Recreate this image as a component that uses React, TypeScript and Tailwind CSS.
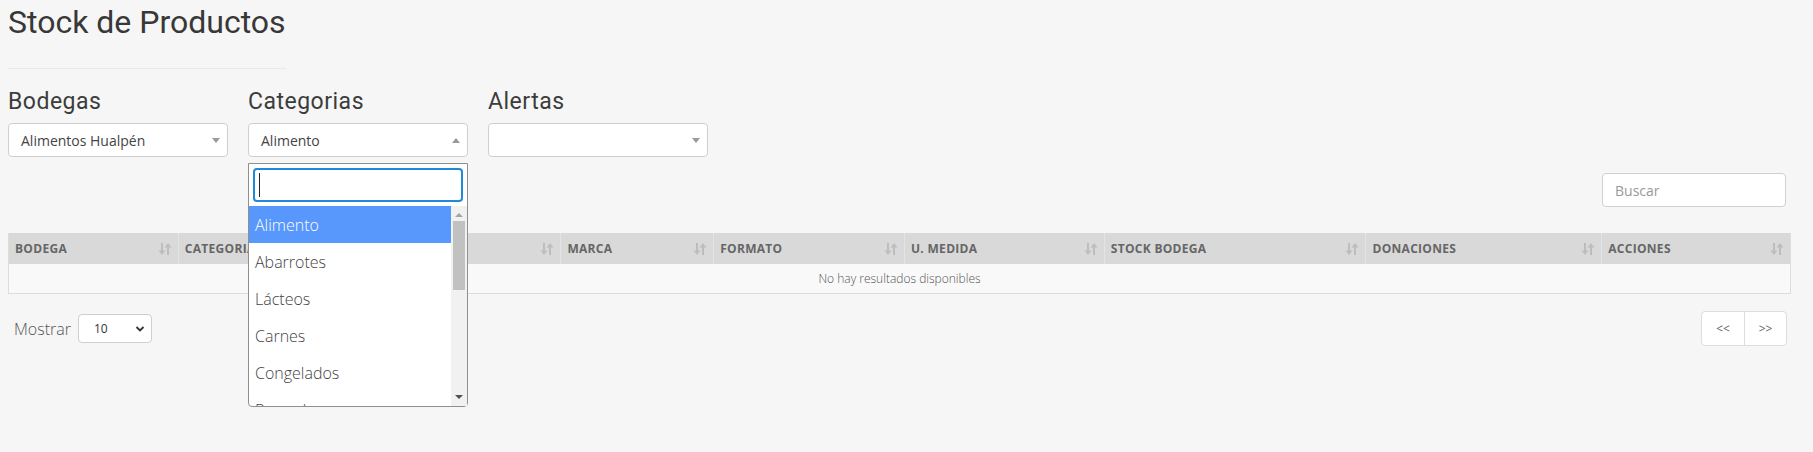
import { useState } from "react";

const columnas = [
  { nombre: "Bodega", ancho: 169 },
  { nombre: "Categoria", ancho: 190 },
  { nombre: "Producto", ancho: 193 },
  { nombre: "Marca", ancho: 153 },
  { nombre: "Formato", ancho: 191 },
  { nombre: "U. Medida", ancho: 200 },
  { nombre: "Stock Bodega", ancho: 262 },
  { nombre: "Donaciones", ancho: 236 },
  { nombre: "Acciones", ancho: 189 },
];

const categorias = ["Alimento", "Abarrotes", "Lácteos", "Carnes", "Congelados", "Pescados"];

function SortIcon() {
  return (
    <svg width="14" height="14" viewBox="0 0 14 14" className="shrink-0">
      <rect x="3" y="1" width="2" height="8" fill="#bdbdbd" />
      <path d="M0.5 8.5 H7.5 L4 13 Z" fill="#bdbdbd" />
      <rect x="9" y="5" width="2" height="8" fill="#bdbdbd" />
      <path d="M6.5 5.5 H13.5 L10 1 Z" fill="#bdbdbd" />
    </svg>
  );
}

function Select2({ valor, abierto }: { valor?: string; abierto?: boolean }) {
  return (
    <div className="flex h-[34px] w-[220px] items-center justify-between rounded-[4px] border border-[#cfcfcf] bg-white pl-3 pr-[7px] text-[14px] text-[#444]">
      <span>{valor}</span>
      {abierto ? (
        <span className="h-0 w-0 border-x-[4px] border-b-[5px] border-x-transparent border-b-[#999]" />
      ) : (
        <span className="h-0 w-0 border-x-[4px] border-t-[5px] border-x-transparent border-t-[#999]" />
      )}
    </div>
  );
}

function Filtro({ titulo, children }: { titulo: string; children: React.ReactNode }) {
  return (
    <div className="relative flex w-[220px] flex-col">
      <h3 className="mb-[8px] font-['Roboto',sans-serif] text-[23px] leading-[26px] tracking-[0.5px] text-[#3c3c3c]">
        {titulo}
      </h3>
      {children}
    </div>
  );
}

export default function App() {
  const [seleccion] = useState("Alimento");

  return (
    <div className="h-[452px] w-full overflow-hidden bg-[#f6f6f6] pl-2 pr-[22px] font-['Open_Sans',sans-serif]">
      <h1 className="pt-[4px] font-['Roboto',sans-serif] text-[32px] leading-[36px] text-[#383838]">
        Stock de Productos
      </h1>
      <hr className="mt-[28px] w-[278px] border-t border-[#e9e9e9]" />

      {/* filtros */}
      <div className="mt-[20px] flex gap-5">
        <Filtro titulo="Bodegas">
          <Select2 valor="Alimentos Hualpén" />
        </Filtro>
        <Filtro titulo="Categorias">
          <Select2 valor={seleccion} abierto />
          <div className="absolute left-0 top-[74px] z-10 w-[220px] rounded-b-[4px] border border-[#8f8f8f] bg-white">
            <div className="p-[4px]">
              <div className="flex h-[34px] items-center rounded-[4px] border-2 border-[#1e8ad9] px-[4px]">
                <span className="h-[24px] w-px bg-[#222]" />
              </div>
            </div>
            <div className="flex h-[200px] overflow-hidden">
              <ul className="flex-1 text-[16px] font-light text-[#444]">
                {categorias.map((c) => (
                  <li
                    key={c}
                    className={
                      c === seleccion
                        ? "flex h-[37px] items-center bg-[#5897fb] px-[6px] text-white"
                        : "flex h-[37px] items-center px-[6px]"
                    }
                  >
                    {c}
                  </li>
                ))}
              </ul>
              <div className="flex w-[16px] flex-col items-center bg-[#f1f1f1]">
                <span className="mt-[7px] h-0 w-0 border-x-[4px] border-b-[4px] border-x-transparent border-b-[#a3a3a3]" />
                <span className="mt-[4px] h-[69px] w-[12px] bg-[#c1c1c1]" />
                <span className="mt-auto mb-[7px] h-0 w-0 border-x-[4px] border-t-[4px] border-x-transparent border-t-[#505050]" />
              </div>
            </div>
          </div>
        </Filtro>
        <Filtro titulo="Alertas">
          <Select2 />
        </Filtro>
      </div>

      {/* buscador */}
      <div className="mt-[16px] flex justify-end pr-[5px]">
        <div className="flex h-[34px] w-[184px] items-center rounded-[4px] border border-[#d0d0d0] bg-white px-3 text-[14px] text-[#999]">
          Buscar
        </div>
      </div>

      {/* tabla */}
      <div className="mt-[26px] border-x border-b border-[#dddddd]">
        <div className="flex h-[31px] bg-[#d9d9d9] text-[12px] font-bold uppercase text-[#666]">
          {columnas.map((col, i) => (
            <div
              key={col.nombre}
              style={{ width: col.ancho }}
              className={
                i === 0
                  ? "flex items-center justify-between pl-[6px] pr-[6px] tracking-[0.3px]"
                  : "flex items-center justify-between border-l border-[#e4e4e4] pl-[6px] pr-[6px] tracking-[0.3px]"
              }
            >
              <span>{col.nombre}</span>
              <SortIcon />
            </div>
          ))}
        </div>
        <div className="flex h-[29px] items-center justify-center bg-[#f9f9f9] text-[12px] font-light text-[#555]">
          No hay resultados disponibles
        </div>
      </div>

      {/* pie */}
      <div className="mt-[17px] flex items-center justify-between">
        <div className="flex items-center">
          <span className="ml-[6px] w-[64px] text-[16px] font-light text-[#555]">Mostrar</span>
          <div className="flex h-[29px] w-[74px] items-center justify-between rounded-[4px] border border-[#cfcfcf] bg-white pl-[15px] pr-[6px] text-[12px] text-[#333]">
            <span>10</span>
            <svg width="10" height="8" viewBox="0 0 10 8">
              <path d="M1.5 2 L5 5.5 L8.5 2" stroke="#333" strokeWidth="1.8" fill="none" />
            </svg>
          </div>
        </div>
        <div className="mr-[4px] flex h-[35px] w-[86px] rounded-[4px] border border-[#dddddd] bg-white text-[12px] text-[#666]">
          <button className="flex w-[43px] items-center justify-center border-r border-[#dddddd]">&lt;&lt;</button>
          <button className="flex flex-1 items-center justify-center">&gt;&gt;</button>
        </div>
      </div>
    </div>
  );
}
